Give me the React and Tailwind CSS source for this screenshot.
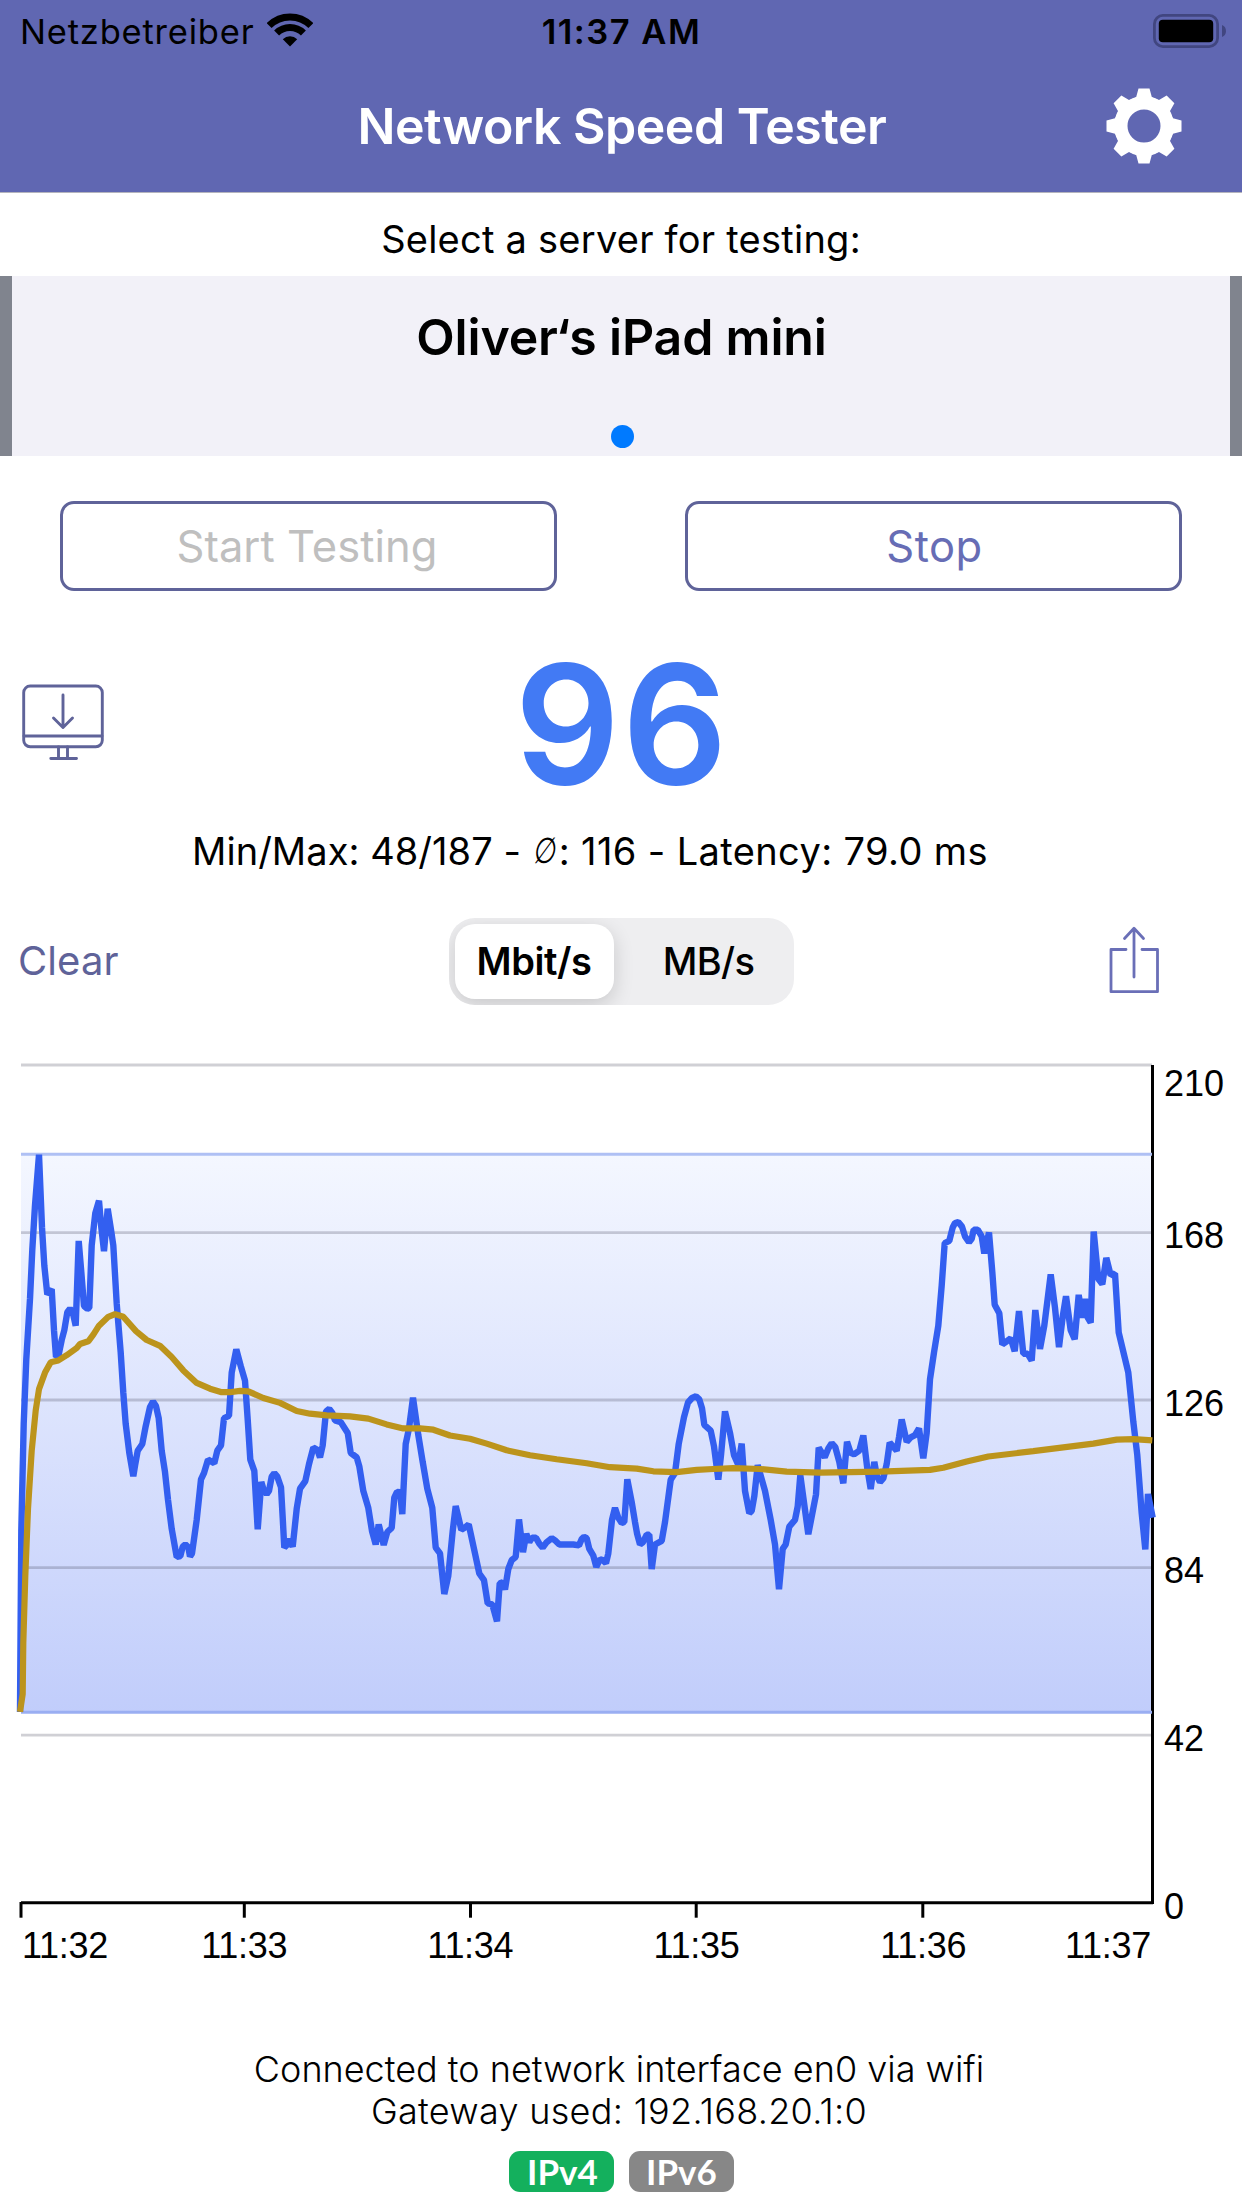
import React from "react";

/* ---------- chart data ---------- */
// Samples are stored per section of the time line; `dx` is the section's start on the x axis.
const SPEED = [
  {
    dx: 0,
    pts: "60,1505 64,1100 71,860 79,715 90,580 97,470 105,370 117,257 126,420 133,505 142,570 155,558 162,650 168,710 176,705 185,672 193,650 202,610 210,602 218,610 227,640 236,450 244,520 252,596 262,602 268,600 275,460 286,388 297,360 304,420 312,473 323,378 333,425 340,460 350,590 362,700 370,790 377,860 388,925 400,977 406,950 413,920 427,905 437,865 450,822 459,810 468,820 476,847 485,920 495,968 504,1030 515,1095 530,1158 541,1156 548,1135 556,1130 565,1136 570,1157 576,1150 590,1075 603,984 612,970 624,940 643,948 652,920 663,908 672,847 687,842 695,745 709,693 722,730 735,763 743,850 751,940 763,965 773,1096 784,990 792,1010 800,1017 807,1010 815,978 823,970 832,978 843,1002 848,1070 853,1137 862,1130 868,1118 878,1135 890,1050 900,1005 916,988 927,950 940,913 952,918 960,935 968,908 978,832 988,826 997,835 1005,852 1022,856 1043,880 1052,925 1070,935 1078,955 1090,1010 1105,1048 1116,1100 1127,1130 1136,1085 1151,1131 1162,1102 1175,1093 1183,1025 1191,1012 1200,1013 1207,1062 1217,905 1227,870",
  },
  {
    dx: 400,
    pts: "39,801 55,885 68,945 82,1005 97,1048 107,1137 120,1150 133,1241 145,1200 158,1100 167,1044 174,1065 184,1097 195,1092 206,1085 222,1140 238,1195 252,1210 263,1262 277,1264 291,1302 299,1217 308,1215 315,1231 325,1185 335,1165 347,1158 357,1074 369,1147 379,1106 388,1125 396,1115 408,1115 418,1128 428,1137 440,1125 455,1116 467,1122 478,1130 500,1130 520,1130 537,1132 545,1118 552,1113 560,1116 568,1140 580,1155 589,1180 600,1163 608,1165 618,1172 625,1150 636,1075 645,1048 655,1070 665,1082 673,1080 682,984 695,1035 705,1080 711,1105 720,1130 729,1125 740,1108 748,1108 755,1185 765,1130 785,1122 795,1080 812,985 825,970 836,905 852,845 864,812 876,802 888,798 898,805 906,825 913,862 932,875 942,910 955,985 963,930 975,832 990,880 1002,930 1015,952 1025,904 1035,1010 1048,1060 1055,1055 1063,1022 1073,952 1095,1010 1112,1075 1125,1130 1137,1230 1148,1140 1157,1130 1168,1090 1185,1075 1193,1045 1201,975",
  },
  {
    dx: 800,
    pts: "25,1107 48,1018 56,913 66,925 74,935 85,915 95,903 106,912 118,945 130,993 141,900 152,925 162,928 178,920 190,886 202,960 212,1006 223,945 230,975 240,990 250,982 260,950 269,902 290,920 297,890 305,850 320,900 332,890 345,885 357,870 370,937 380,880 390,760 402,700 415,640 425,550 434,455 448,450 458,420 465,410 475,408 486,418 495,440 507,453 515,445 521,425 533,425 545,440 553,478 567,431 577,520 584,593 598,612 607,682 620,675 632,668 644,697 657,607 670,703 683,703 695,718 706,605 720,692 733,640 752,525 765,600 777,688 788,620 798,574 812,650 824,670 836,571 847,622 855,580 863,622 872,633 881,429 895,535 907,547 919,488 932,527 945,523 956,655 985,745 1000,855 1012,930 1025,1060 1036,1141 1044,1017 1058,1070",
  },
];

const AVERAGE = [
  {
    dx: 0,
    pts: "60,1505 68,1465 70,1350 76,1200 84,1050 95,920 107,830 117,782 135,745 152,722 175,718 200,706 230,690 240,681 265,675 280,660 297,640 325,620 345,614 370,620 408,652 440,672 480,685 515,710 550,740 590,768 630,781 665,789 690,789 720,786 745,787 790,802 840,813 890,831 930,837 980,841 1050,843 1105,848 1160,861 1210,870",
  },
  {
    dx: 400,
    pts: "60,870 100,873 150,886 210,893 260,904 320,919 390,930 470,939 560,948 630,957 710,960 760,966 830,968 890,963 940,961 1000,959 1080,961 1160,967",
  },
  {
    dx: 800,
    pts: "60,969 240,967 390,963 430,958 500,944 565,933 700,921 880,904 950,895 1000,894 1057,897",
  },
];

const toPoints = (sections) =>
  sections
    .flatMap(({ dx, pts }) =>
      pts.split(" ").map((p) => {
        const [x, y] = p.split(",").map(Number);
        return `${(dx + x / 3).toFixed(1)},${(1040 + y / 2.24).toFixed(1)}`;
      })
    )
    .join(" ");

const GRID = [1065, 1232.6, 1400, 1567.7, 1735.2];

const Y_LABELS = [
  ["210", 1096],
  ["168", 1248],
  ["126", 1416],
  ["84", 1583],
  ["42", 1751],
  ["0", 1918.5],
];

const X_LABELS = [
  ["11:32", 65],
  ["11:33", 244.2],
  ["11:34", 470.3],
  ["11:35", 696.4],
  ["11:36", 923.2],
  ["11:37", 1108],
];

const TICKS = [21, 244.3, 470.5, 696.2, 922.8];

function Chart() {
  return (
    <svg viewBox="0 1005 1242 1042" className="block h-[1042px] w-full">
      <defs>
        <linearGradient id="band" x1="0" y1="0" x2="0" y2="1">
          <stop offset="0" stopColor="#f4f7ff" />
          <stop offset="1" stopColor="#c1cdfb" />
        </linearGradient>
      </defs>
      <rect x="21" y="1154" width="1131" height="559" fill="url(#band)" />
      {GRID.map((y) => (
        <line key={y} x1="21" x2="1152" y1={y} y2={y} stroke="rgb(60,60,80)" strokeOpacity="0.24" strokeWidth="2.8" />
      ))}
      <line x1="1152.5" x2="1152.5" y1="1065" y2="1904" stroke="#000" strokeWidth="3" />
      <line x1="21" x2="1153" y1="1902.7" y2="1902.7" stroke="#000" strokeWidth="3" />
      {TICKS.map((x) => (
        <line key={x} x1={x} x2={x} y1="1902" y2="1917.7" stroke="#000" strokeWidth="3" />
      ))}
      <line x1="21" x2="1152" y1="1154.3" y2="1154.3" stroke="#afc0f4" strokeWidth="3" />
      <line x1="21" x2="1152" y1="1712.2" y2="1712.2" stroke="#9aaef2" strokeWidth="3" />
      <polyline points={toPoints(SPEED)} fill="none" stroke="#335ff0" strokeWidth="6.4" strokeLinejoin="bevel" />
      <polyline points={toPoints(AVERAGE)} fill="none" stroke="#bc941c" strokeWidth="6.2" strokeLinejoin="bevel" />
      <g fontFamily="Liberation Sans, Arial, sans-serif" fontSize="36" fill="#000">
        {Y_LABELS.map(([t, y]) => (
          <text key={t} x="1164" y={y}>
            {t}
          </text>
        ))}
        {X_LABELS.map(([t, x]) => (
          <text key={t} x={x} y="1958" textAnchor="middle" letterSpacing="-0.3">
            {t}
          </text>
        ))}
      </g>
    </svg>
  );
}

/* ---------- icons ---------- */
function WifiIcon() {
  return (
    <svg viewBox="0 0 46 34" className="h-[34px] w-[46px]" fill="none" stroke="#000" strokeWidth="7">
      <path d="M2.1 12.6A29.5 29.5 0 0 1 43.9 12.6" />
      <path d="M9.6 20.1A19 19 0 0 1 36.4 20.1" />
      <path d="M23 33.5 15.8 26.3A10.3 10.3 0 0 1 30.2 26.3Z" fill="#000" stroke="none" />
    </svg>
  );
}

function BatteryIcon() {
  return (
    <svg viewBox="0 0 74 34" className="h-[34px] w-[74px]">
      <rect x="1.4" y="1.4" width="63.2" height="31.2" rx="8.5" fill="none" stroke="#414680" strokeWidth="2.8" />
      <rect x="5.8" y="5.8" width="54.4" height="22.4" rx="4" fill="#000" />
      <path d="M69 11c5.3 1.5 5.3 10.5 0 12z" fill="#414680" />
    </svg>
  );
}

function GearIcon() {
  return (
    <svg viewBox="-38 -38 76 76" className="h-[76px] w-[76px]">
      <circle r="23.2" fill="none" stroke="#fff" strokeWidth="13.4" />
      {[0, 45, 90, 135, 180, 225, 270, 315].map((a) => (
        <path key={a} d="M-5.5-37.5H5.5L7.8-29 12-26.5H-12L-7.8-29Z" fill="#fff" transform={`rotate(${a})`} />
      ))}
    </svg>
  );
}

function DownloadMonitorIcon() {
  return (
    <svg viewBox="22 683 82 77" className="h-[77px] w-[82px]" fill="none" stroke="#5f6399" strokeWidth="2.9" strokeLinecap="round">
      <rect x="23.7" y="685" width="78.6" height="60.8" rx="6.5" />
      <path d="M24 735H102M58.5 746V757M67.5 746V757M50.8 757.5H76.5" />
      <path d="M63 694V726.5M53.5 717 63 726.5 72.5 717" strokeLinejoin="round" />
    </svg>
  );
}

function ShareIcon() {
  return (
    <svg viewBox="1109 926 51 68" className="h-[68px] w-[51px]" fill="none" stroke="#6a6fb7" strokeWidth="2.8" strokeLinecap="round" strokeLinejoin="round">
      <path d="M1126 949.5H1111V991.7H1157.5V949.5H1142" />
      <path d="M1134 977V928.5M1124.5 938.5 1134 928.3 1143.5 938.5" />
    </svg>
  );
}

/* ---------- page ---------- */
export default function App() {
  return (
    <div className="flex h-[2208px] w-[1242px] flex-col overflow-hidden bg-white font-['Inter',sans-serif] text-black">
      <header className="h-[193px] shrink-0 border-b border-[#b4b4bd] bg-[#6067b2]">
        <div className="grid h-[63px] grid-cols-3 items-center pl-5 pr-[15px]">
          <div className="flex items-center text-[34.5px] tracking-[0.8px]">
            Netzbetreiber
            <span className="-mt-1 ml-[13px]">
              <WifiIcon />
            </span>
          </div>
          <div className="pr-1 text-center text-[34.5px] font-semibold tracking-[1.5px]">11:37 AM</div>
          <div className="-mt-0.5 flex justify-end">
            <BatteryIcon />
          </div>
        </div>
        <div className="grid h-[126px] grid-cols-[138px_1fr_136px] items-center">
          <span />
          <h1 className="text-center text-[50px] font-semibold tracking-[-0.5px] text-white">Network Speed Tester</h1>
          <span className="-mt-px">
            <GearIcon />
          </span>
        </div>
      </header>

      <div className="flex h-[83px] shrink-0 items-center justify-center pt-[10px] text-[38px] tracking-[0.24px]">
        Select a server for testing:
      </div>

      <section className="flex h-[180px] shrink-0 flex-col items-center border-x-[12px] border-[#80848e] bg-[#f2f1f8]">
        <div className="flex h-[122px] items-center pl-px text-[50px] font-semibold tracking-[-0.18px]">Oliver‘s iPad mini</div>
        <span className="ml-0.5 mt-[27px] size-[23px] rounded-full bg-[#007aff]" />
      </section>

      <div className="flex shrink-0 justify-between px-[60px] pt-[45px]">
        <button className="h-[90px] w-[497px] rounded-[14px] border-[3px] border-[#5f6399] pr-[3px] pt-0.5 text-[43.5px] tracking-[0.05px] text-[#bfbfbf]">
          Start Testing
        </button>
        <button className="h-[90px] w-[497px] rounded-[14px] border-[3px] border-[#5f6399] pl-0.5 pt-0.5 text-[43.5px] tracking-[0.5px] text-[#676db5]">
          Stop
        </button>
      </div>

      <div className="mt-[51px] grid h-[161px] shrink-0 grid-cols-[104px_1fr_104px] items-center">
        <span className="-mt-1 pl-[22px]">
          <DownloadMonitorIcon />
        </span>
        <span className="pl-0.5 text-center text-[165px] font-semibold leading-none tracking-[2px] text-[#427af4]">96</span>
      </div>

      <div className="mt-[23px] flex h-[50px] shrink-0 items-center whitespace-pre pl-[192px] text-[38px] tracking-[0.05px]">
        Min/Max: 48/187 -{" "}
        <span className="flex w-[27px] justify-center">
          <span className="inline-block -skew-x-12 scale-x-[0.72] font-['DejaVu_Sans'] text-[36px] leading-none">∅</span>
        </span>
        <span className="tracking-[0.38px]">: 116 - Latency: 79.0 ms</span>
      </div>

      <div className="mt-[42px] grid h-[87px] shrink-0 grid-cols-[449px_345px_1fr] items-center">
        <span className="-mt-0.5 pl-[18px] text-[40px] tracking-[0.1px] text-[#5f6399]">Clear</span>
        <div className="flex h-full items-center overflow-hidden rounded-[26px] bg-[#eeeef0] p-[6px] text-[38px]">
          <span className="flex h-[75px] w-[159px] items-center justify-center rounded-[20px] bg-white pr-px font-semibold tracking-[-0.4px] shadow-[0_6px_20px_rgba(0,0,0,0.16)]">
            Mbit/s
          </span>
          <span className="flex-1 pl-[15px] text-center font-medium tracking-[-0.6px]">MB/s</span>
        </div>
        <span className="-mt-1 pl-[315px]">
          <ShareIcon />
        </span>
      </div>

      <div className="shrink-0">
        <Chart />
      </div>

      <footer className="flex shrink-0 flex-col items-center pt-px">
        <div className="pr-1 text-center text-[36px] font-light leading-[42.3px]">
          <p>Connected to network interface en0 via wifi</p>
          <p className="tracking-[0.3px]">Gateway used: 192.168.20.1:0</p>
        </div>
        <div className="mt-[18px] flex gap-[15px] pl-px font-['Lato'] text-[35px] font-bold leading-none text-white">
          <span className="flex h-[41px] w-[105px] items-center justify-center rounded-[11px] bg-[#14b05d] pl-0.5">IPv4</span>
          <span className="flex h-[41px] w-[105px] items-center justify-center rounded-[11px] bg-[#878787]">IPv6</span>
        </div>
      </footer>
    </div>
  );
}
